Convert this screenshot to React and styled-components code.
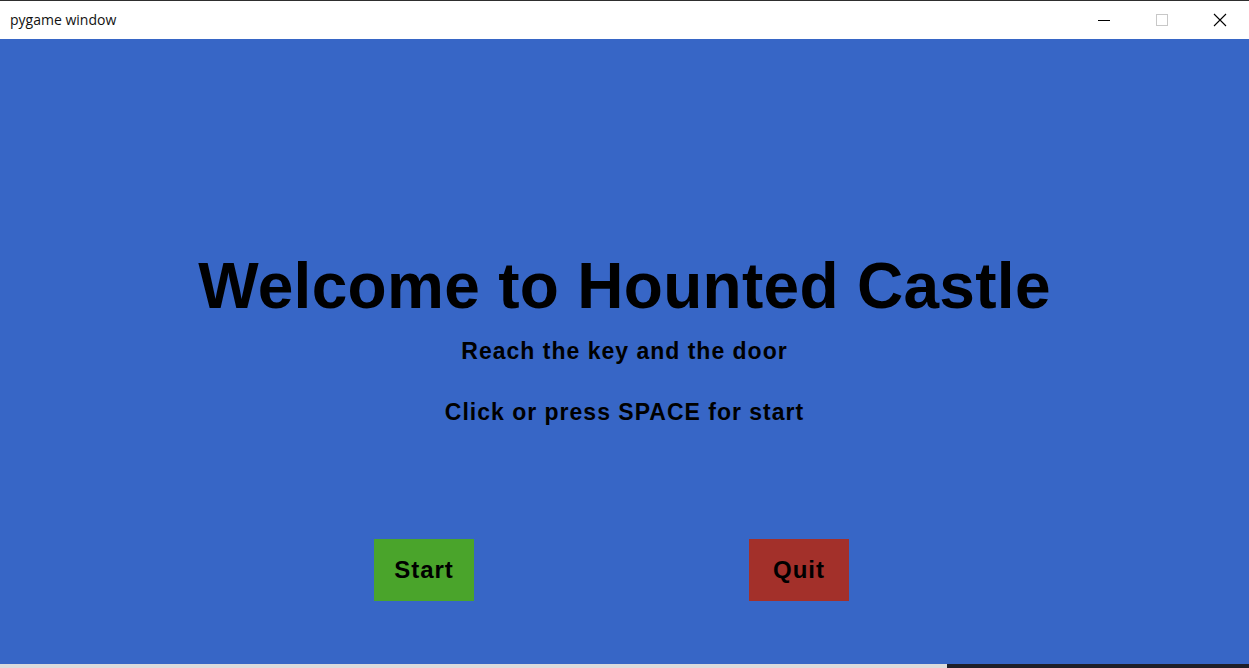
import React from "react";
import styled, { createGlobalStyle } from "styled-components";

const GlobalStyle = createGlobalStyle`
  html, body {
    margin: 0;
    padding: 0;
    width: 1249px;
    height: 668px;
    overflow: hidden;
    background: #e9e9e9;
  }
  * {
    box-sizing: border-box;
  }
`;

const Window = styled.div`
  display: flex;
  flex-direction: column;
  width: 1249px;
  height: 668px;
`;

const TitleBar = styled.div`
  display: flex;
  align-items: center;
  height: 39px;
  border-top: 1px solid #2e2e2e;
  background: #ffffff;
  flex-shrink: 0;
`;

const Caption = styled.span`
  flex: 1;
  padding-left: 10px;
  padding-bottom: 1px;
  font-family: "Open Sans", "Noto Sans", sans-serif;
  font-size: 14px;
  color: #111;
`;

const Control = styled.div`
  width: 58px;
  height: 38px;
  display: flex;
  align-items: center;
  justify-content: center;
`;

const Screen = styled.main`
  flex: 1;
  display: flex;
  flex-direction: column;
  align-items: center;
  background: #3766c6;
  padding-top: 215px;
  font-family: "Liberation Sans", Arial, sans-serif;
  font-weight: 700;
  color: #000;
`;

const Heading = styled.h1`
  margin: 0;
  font-size: 64px;
  line-height: 64px;
  font-weight: 700;
  letter-spacing: 0.3px;
`;

const Line = styled.p`
  margin: ${(p) => p.$top}px 0 0;
  font-size: 23px;
  line-height: 23px;
  letter-spacing: 1px;
`;

const ButtonRow = styled.div`
  align-self: stretch;
  display: flex;
  gap: 275px;
  padding-left: 374px;
  margin-top: 115px;
`;

const MenuButton = styled.button`
  width: 100px;
  height: 62px;
  border: none;
  padding: 0 0 1px;
  display: flex;
  align-items: center;
  justify-content: center;
  background: ${(p) => p.$bg};
  font-family: "Liberation Sans", Arial, sans-serif;
  font-weight: 700;
  font-size: 24px;
  letter-spacing: 1px;
  color: #000;
  cursor: pointer;
`;

const Taskbar = styled.div`
  height: 4px;
  flex-shrink: 0;
  display: flex;
`;

const TaskPart = styled.div`
  flex: ${(p) => p.$grow};
  background: ${(p) => p.$bg};
`;

export default function App() {
  return (
    <>
      <GlobalStyle />
      <Window>
        <TitleBar>
          <Caption>pygame window</Caption>
          <Control>
            <svg width="14" height="14" viewBox="0 0 14 14">
              <line x1="1" y1="7.5" x2="13" y2="7.5" stroke="#000" strokeWidth="1" />
            </svg>
          </Control>
          <Control>
            <svg width="14" height="14" viewBox="0 0 14 14">
              <rect x="1.5" y="1.5" width="11" height="11" fill="none" stroke="#c8c8c8" strokeWidth="1" />
            </svg>
          </Control>
          <Control>
            <svg width="14" height="14" viewBox="0 0 14 14">
              <path d="M1 1 L13 13 M13 1 L1 13" stroke="#000" strokeWidth="1.1" />
            </svg>
          </Control>
        </TitleBar>
        <Screen>
          <Heading>Welcome to Hounted Castle</Heading>
          <Line $top={22}>Reach the key and the door</Line>
          <Line $top={38}>Click or press SPACE for start</Line>
          <ButtonRow>
            <MenuButton $bg="#4aa42b">Start</MenuButton>
            <MenuButton $bg="#a3302a">Quit</MenuButton>
          </ButtonRow>
        </Screen>
        <Taskbar>
          <TaskPart $grow={947} $bg="#dcdcdc" />
          <TaskPart $grow={302} $bg="#1e1f29" />
        </Taskbar>
      </Window>
    </>
  );
}
